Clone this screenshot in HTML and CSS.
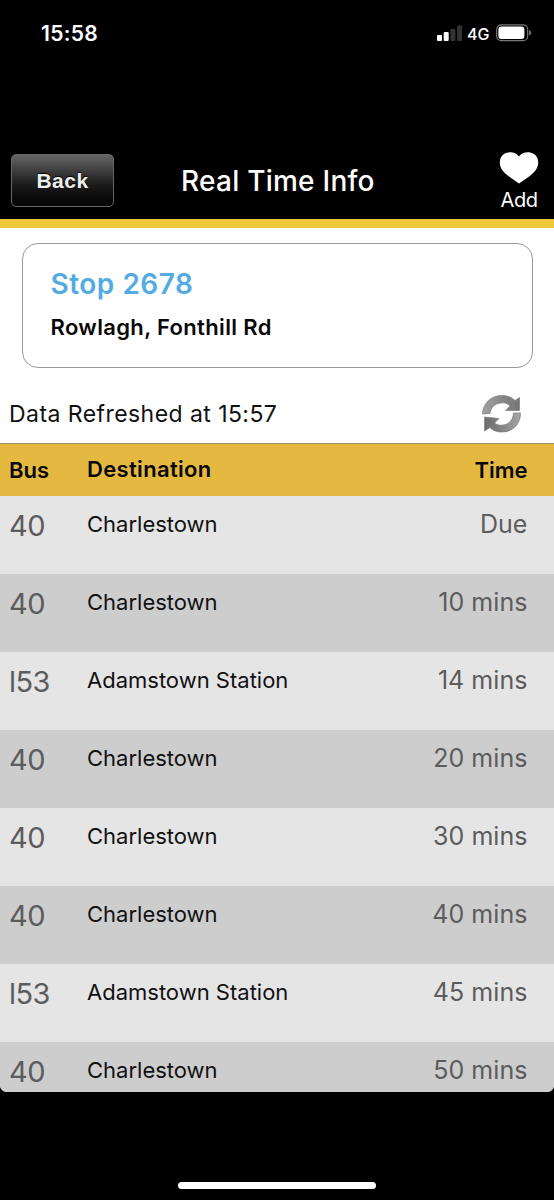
FILE: index.html
```html
<!DOCTYPE html>
<html lang="en">
<head>
<meta charset="utf-8">
<meta name="viewport" content="width=device-width">
<title>Real Time Info</title>
<link rel="stylesheet" href="styles.css">
</head>
<body>
<div class="phone">
  <div class="status-bar">
    <span class="clock">15:58</span>
    <svg class="signal" width="26" height="17" viewBox="0 0 26 17">
      <rect x="0" y="10" width="5" height="6" rx="1" fill="#fff"/>
      <rect x="6.7" y="7" width="5" height="9" rx="1" fill="#fff"/>
      <rect x="13.4" y="4" width="5" height="12" rx="1" fill="#333"/>
      <rect x="20.1" y="0.5" width="5" height="15.5" rx="1" fill="#333"/>
    </svg>
    <span class="network">4G</span>
    <svg class="battery" width="36" height="18" viewBox="0 0 36 18">
      <rect x="0.7" y="0.9" width="31" height="15.8" rx="4.5" fill="none" stroke="#777" stroke-width="1.2"/>
      <rect x="2.4" y="2.6" width="26" height="12.4" rx="3" fill="#fff"/>
      <path d="M33.2 6v5.6q2-.8 2-2.8t-2-2.8z" fill="#777"/>
    </svg>
  </div>
  <header class="nav">
    <button class="back">Back</button>
    <h1 class="title">Real Time Info</h1>
    <div class="add">
      <svg class="heart" width="40" height="32" viewBox="0 0 40 32">
        <path d="M20 31.500C15 28 8 24 4 19C-1 13 .2 5 5 2C10-1 17 0 20 4.500C23 0 30-1 35 2C39.800 5 41 13 36 19C32 24 25 28 20 31.500Z" fill="#fff"/>
      </svg>
      <span class="add-label">Add</span>
    </div>
  </header>
  <main class="content">
    <section class="stop-card">
      <h2 class="stop-name">Stop 2678</h2>
      <p class="stop-address">Rowlagh, Fonthill Rd</p>
    </section>
    <div class="refresh-row">
      <span class="refreshed">Data Refreshed at 15:57</span>
      <svg class="refresh" width="42" height="42" viewBox="0 0 42 42">
        <defs>
          <linearGradient id="steel-top" x1="0" y1="0" x2="1" y2="0">
            <stop offset="0" stop-color="#a2a2a2"/><stop offset=".6" stop-color="#858585"/><stop offset="1" stop-color="#747474"/>
          </linearGradient>
          <linearGradient id="steel-bottom" x1="0" y1="0" x2="1" y2="0">
            <stop offset="0" stop-color="#6c6c6c"/><stop offset=".5" stop-color="#858585"/><stop offset="1" stop-color="#a6a6a6"/>
          </linearGradient>
        </defs>
        <g stroke="#7c7c7c" stroke-width=".7">
          <path fill="url(#steel-top)" d="M1.500 20C2 9 10 1.500 21 1.500C27 1.500 31 3.500 34 6.500L38.500 3.500V16.500H24.500L29 12C26 9 23 8.500 20 9C14 9.500 10 13 9 19.500Z"/>
          <path fill="url(#steel-bottom)" d="M39.500 19C39.500 30 32 38 21 38C15 38 11 36 9 33.500L3.500 37V23L18 24.500L13.500 29C16 31 19 31.500 22 31C28 30.500 32 26 32.500 19Z"/>
        </g>
      </svg>
    </div>
    <table class="board">
      <thead><tr><th class="bus">Bus</th><th class="dest">Destination</th><th class="time">Time</th></tr></thead>
      <tbody>
        <tr><td class="bus">40</td><td class="dest">Charlestown</td><td class="time">Due</td></tr>
        <tr><td class="bus">40</td><td class="dest">Charlestown</td><td class="time">10 mins</td></tr>
        <tr><td class="bus">l53</td><td class="dest">Adamstown Station</td><td class="time">14 mins</td></tr>
        <tr><td class="bus">40</td><td class="dest">Charlestown</td><td class="time">20 mins</td></tr>
        <tr><td class="bus">40</td><td class="dest">Charlestown</td><td class="time">30 mins</td></tr>
        <tr><td class="bus">40</td><td class="dest">Charlestown</td><td class="time">40 mins</td></tr>
        <tr><td class="bus">l53</td><td class="dest">Adamstown Station</td><td class="time">45 mins</td></tr>
        <tr><td class="bus">40</td><td class="dest">Charlestown</td><td class="time">50 mins</td></tr>
      </tbody>
    </table>
  </main>
  <footer class="home-area"><div class="home-indicator"></div></footer>
</div>
</body>
</html>
```
FILE: styles.css
```css
* { box-sizing: border-box; margin: 0; padding: 0; }
body { background: #000; font-family: Inter, "Liberation Sans", sans-serif; }
.phone { width: 554px; height: 1200px; overflow: hidden; background: #000; display: flex; flex-direction: column; }
.status-bar { height: 140px; flex: none; display: flex; align-items: flex-start; padding: 20px 22px 0 41px; color: #fff; }
.clock { font-size: 21px; line-height: 28px; font-weight: 600; letter-spacing: .3px; margin-right: auto; }
.signal { margin: 5px 4px 0 0; }
.network { font-size: 16px; line-height: 28px; font-weight: 500; width: 29px; }
.battery { margin-top: 4px; }
.nav { height: 79px; flex: none; display: grid; grid-template-columns: 103px 1fr 40px; padding: 12px 15px 0 11px; color: #fff; }
.back { width: 103px; height: 53px; margin-top: 2px; border: 1.5px solid #666; border-radius: 5px; background: linear-gradient(#666 0, #3c3c3c 32%, #1c1c1c 58%, #080808 85%); color: #eee; font: bold 21px/48px "Liberation Sans", sans-serif; letter-spacing: .5px; text-shadow: 0 -1px 1px #000; }
.title { font-size: 28px; line-height: 58px; font-weight: 500; letter-spacing: .25px; white-space: nowrap; padding-left: 67px; }
.add { width: 40px; display: flex; flex-direction: column; align-items: center; }
.add-label { font-size: 20px; line-height: 24px; margin-top: 4px; font-weight: 400; letter-spacing: -.5px; }
.heart { flex: none; }
.content { height: 873px; flex: none; overflow: hidden; background: #fff; border-top: 9px solid #f0c83c; border-radius: 0 0 7px 7px; }
.stop-card { width: 511px; height: 125px; margin: 15px 0 0 22px; border: 1px solid #999; border-radius: 16px; padding: 21px 27.500px; }
.stop-name { font-size: 28px; line-height: 38px; font-weight: 600; letter-spacing: .5px; color: #54abe4; }
.stop-address { font-size: 22px; line-height: 30px; margin-top: 9px; font-weight: 600; letter-spacing: .35px; color: #090909; }
.refresh-row { height: 75px; display: flex; justify-content: space-between; align-items: flex-start; padding: 25px 31px 0 9px; }
.refreshed { font-size: 23px; line-height: 42px; letter-spacing: .44px; color: #111; }
.refresh { margin-top: 1px; }
.board { width: 554px; table-layout: fixed; border-collapse: separate; border-spacing: 0; }
.board th { height: 53px; background: #e5b93f; border-top: 1px solid #9c8c63; font-size: 22px; line-height: 30px; font-weight: 600; color: #080808; text-align: left; }
.board th.dest { letter-spacing: .33px; padding-bottom: 2px; }
.board td { height: 78px; vertical-align: top; line-height: 30px; padding-top: 13px; }
.board tbody tr:nth-child(odd) { background: #e5e5e5; }
.board tbody tr:nth-child(even) { background: #cdcdcd; }
.board .bus { width: 87px; padding-left: 9px; }
.board .time { width: 154px; padding-right: 26.500px; text-align: right; }
.board td.bus { font-size: 29px; padding-top: 15px; letter-spacing: -.6px; color: #5c5c5c; }
.board td.dest { font-size: 22px; color: #111; }
.board td.time { font-size: 25px; letter-spacing: .05px; color: #5c5c5c; }
.home-area { flex: 1; display: flex; align-items: flex-end; justify-content: center; padding-bottom: 11px; }
.home-indicator { width: 198px; height: 7px; border-radius: 4px; background: #fff; }
```
